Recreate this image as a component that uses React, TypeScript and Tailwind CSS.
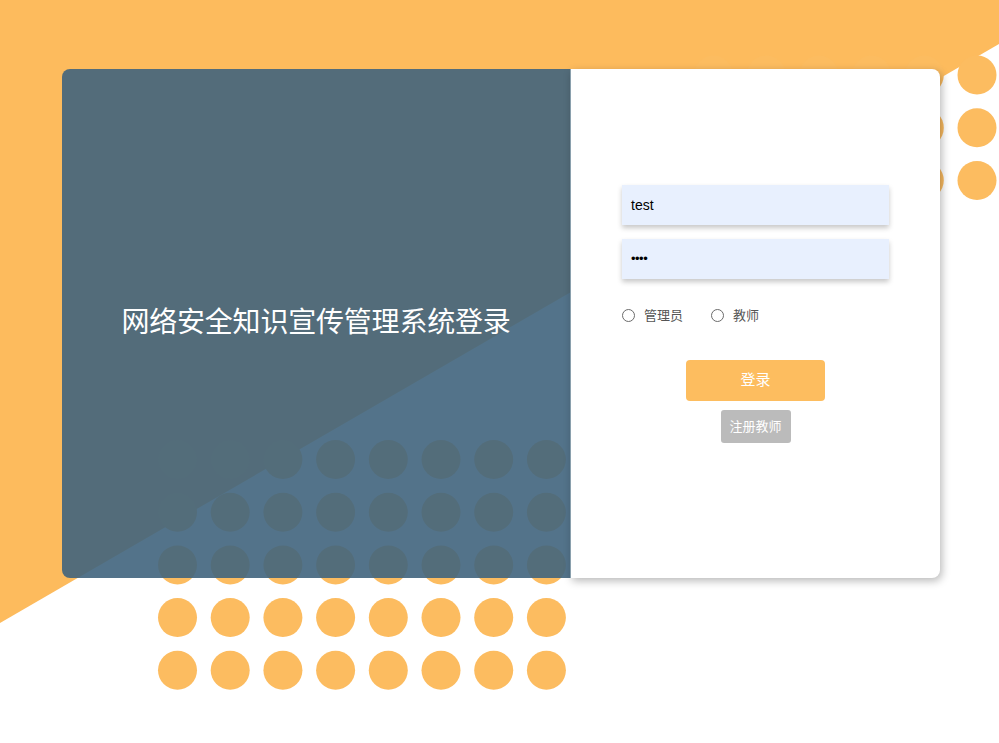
import React from "react";

const cols = Array.from({ length: 8 }, (_, i) => i);
const rows = Array.from({ length: 5 }, (_, i) => i);
const trCols = Array.from({ length: 6 }, (_, i) => i);
const trRows = Array.from({ length: 3 }, (_, i) => i);

function Background() {
  return (
    <svg
      className="absolute inset-0"
      width="999"
      height="743"
      viewBox="0 0 999 743"
      xmlns="http://www.w3.org/2000/svg"
    >
      <polygon points="0,0 999,0 999,44 0,623" fill="#fdbb5d" />
      {cols.map((i) =>
        rows.map((j) => (
          <circle
            key={`b-${i}-${j}`}
            cx={177.5 + i * 52.7}
            cy={459.5 + j * 52.7}
            r={19.5}
            fill="#fcbc60"
          />
        ))
      )}
      {trCols.map((k) =>
        trRows.map((j) => (
          <circle
            key={`t-${k}-${j}`}
            cx={977 - k * 52.7}
            cy={75 + j * 52.7}
            r={19.5}
            fill="#fcbc60"
          />
        ))
      )}
    </svg>
  );
}

function Radio({ label }: { label: string }) {
  return (
    <label className="flex items-center">
      <span className="w-[13px] h-[13px] rounded-full border border-[#6b6b6b] bg-white" />
      <span className="ml-[9px] text-[13px] leading-none text-[#555]">{label}</span>
    </label>
  );
}

export default function App() {
  return (
    <div
      className="relative w-[999px] h-[743px] overflow-hidden bg-white"
      style={{ fontFamily: '"Liberation Sans", "Noto Sans CJK SC", sans-serif' }}
    >
      <Background />
      <div className="relative pt-[69px] pl-[62px]">
        <div className="flex w-[878px] h-[509px]">
          <div className="w-[508px] h-full rounded-l-lg bg-[rgba(64,100,125,0.9)] flex items-center justify-center">
            <h1 className="text-[28px] leading-none text-white tracking-[-0.2px] pb-[1px]">
              网络安全知识宣传管理系统登录
            </h1>
          </div>
          <div className="w-[370px] h-full rounded-r-lg bg-white shadow-[2px_3px_8px_rgba(0,0,0,0.28)] border-l border-[#8aa0ad] flex flex-col items-center pt-[116px]">
            <div className="w-[267px] flex flex-col gap-[14px]">
              <div className="h-10 bg-[#e8f0fe] shadow-[0_3px_5px_rgba(0,0,0,0.22)] flex items-center pl-[9px] text-[14px] text-black">
                test
              </div>
              <div className="h-10 bg-[#e8f0fe] shadow-[0_3px_5px_rgba(0,0,0,0.22)] flex items-center pl-[9px] text-[13px] text-black tracking-[-0.5px]">
                ••••
              </div>
              <div className="flex items-center gap-[28px] mt-[16px]">
                <Radio label="管理员" />
                <Radio label="教师" />
              </div>
            </div>
            <button className="mt-[38px] w-[139px] h-[41px] rounded-[4px] bg-[#fdbd5f] text-white text-[15px]">
              登录
            </button>
            <button className="mt-[9px] w-[70px] h-[33px] rounded-[3px] bg-[#bbbbbb] text-white text-[13px]">
              注册教师
            </button>
          </div>
        </div>
      </div>
    </div>
  );
}
